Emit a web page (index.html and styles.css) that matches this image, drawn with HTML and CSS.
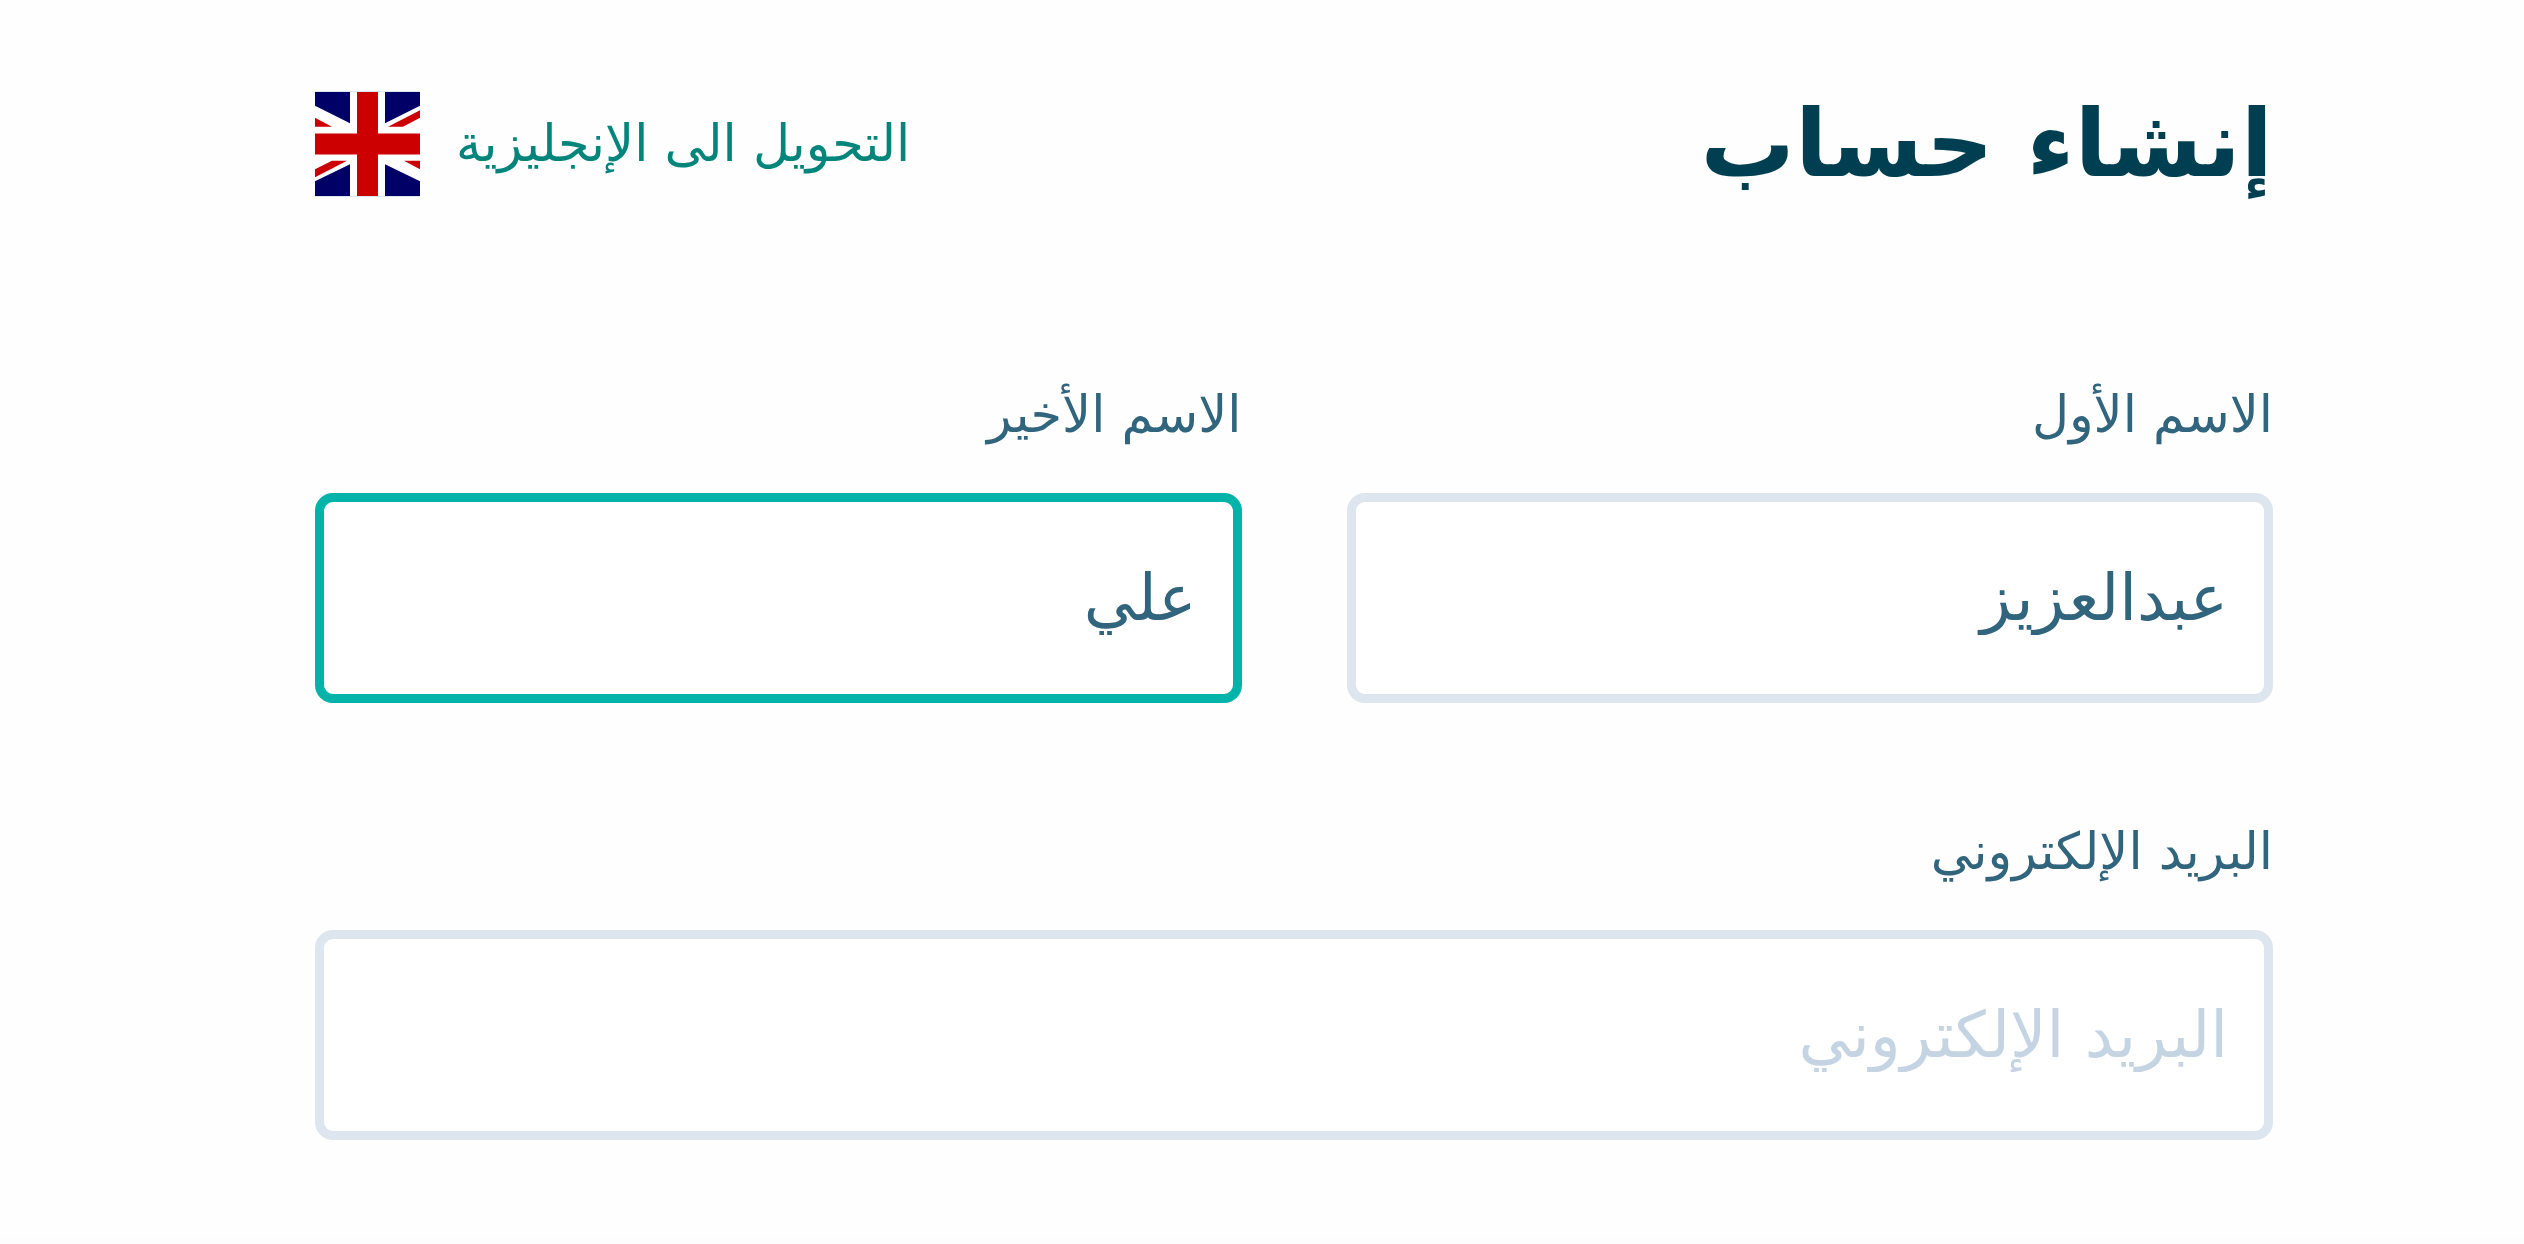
FILE: index.html
```html
<!DOCTYPE html>
<html lang="ar" dir="rtl">

<head>
  <meta charset="UTF-8">
  <meta name="viewport" content="width=device-width, initial-scale=1.0">
  <title>إنشاء حساب</title>
  <link rel="stylesheet" href="styles.css">
</head>

<body>
  <main class="signup">
    <header class="signup-header">
      <h1 class="title">إنشاء حساب</h1>
      <a href="#" class="language">
        <span class="language-text">التحويل الى الإنجليزية</span>
        <svg class="flag" viewBox="0 0 105 105" preserveAspectRatio="none" aria-hidden="true">
          <rect width="105" height="105" fill="#fff" />
          <path fill="#006" d="M0 0h35v31.500L0 14zM70 0h35v14L70 31.500zM35 73v32H0V90zM70 73v32h35V90z" />
          <path fill="#c00" d="M0 26l17 9H0zM73 35h15l17-9v-7.500zM0 86v-8l17-8.500h15zM89 69.500h16V78z" />
          <path fill="#c00" d="M42 0h21v105H42zM0 42h105v21H0z" />
        </svg>
      </a>
    </header>

    <form class="form">
      <div class="field">
        <label for="first-name">الاسم الأول</label>
        <input type="text" id="first-name" value="عبدالعزيز">
      </div>
      <div class="field">
        <label for="last-name">الاسم الأخير</label>
        <input type="text" id="last-name" class="active" value="علي">
      </div>
      <div class="field wide">
        <label for="email">البريد الإلكتروني</label>
        <input type="email" id="email" placeholder="البريد الإلكتروني">
      </div>
    </form>
  </main>
</body>

</html>
```

FILE: styles.css
```css
* {
  margin: 0;
  padding: 0;
  box-sizing: border-box;
}

body {
  background-color: #fdfdfd;
  font-family: "DejaVu Sans", sans-serif;
  color: #31647d;
}

.signup {
  padding: 84px 251px 95px 315px;
  background-color: #fefefe;
}

.signup-header {
  display: flex;
  justify-content: space-between;
  align-items: center;
  height: 120px;
  margin-bottom: 168px;
}

.title {
  color: #003f51;
  font-size: 94px;
  line-height: 120px;
  font-weight: bold;
}

.language {
  display: flex;
  align-items: center;
  gap: 36px;
  color: #04857b;
  text-decoration: none;
}

.language-text {
  font-size: 51px;
  line-height: 72px;
}

.flag {
  width: 105px;
  height: 106px;
  border-top: 1px solid #dde6ee;
  border-bottom: 1px solid #dde6ee;
}

.form {
  display: grid;
  grid-template-columns: 1fr 1fr;
  gap: 106px 105px;
}

.field {
  display: flex;
  flex-direction: column;
  gap: 36px;
}

.wide {
  grid-column: 1 / -1;
}

.field label {
  font-size: 51px;
  line-height: 85px;
}

.field input {
  width: 100%;
  height: 210px;
  padding: 0 36px;
  border: 9px solid #dde6ee;
  border-radius: 18px;
  background-color: #ffffff;
  color: #31647d;
  font-family: inherit;
  font-size: 64px;
  text-align: right;
  outline: none;
}

.field input.active {
  border-color: #02b3aa;
}

.field input::placeholder {
  color: #c5d4e3;
  line-height: 70px;
  overflow: hidden;
  opacity: 1;
}
```
